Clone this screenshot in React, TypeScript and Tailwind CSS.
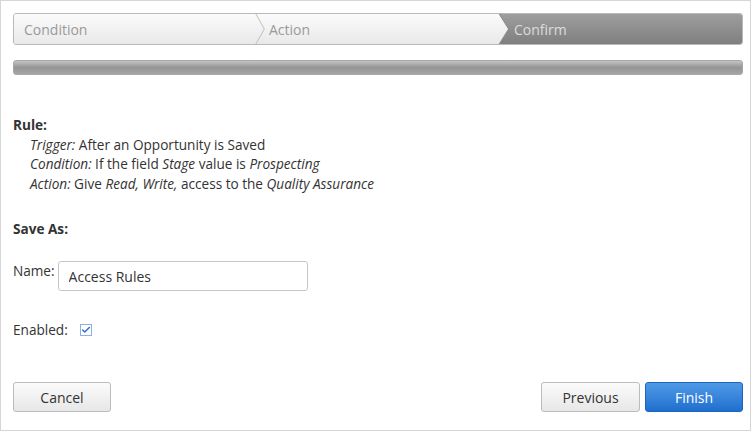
import { Check } from 'lucide-react';

const font = { fontFamily: '"Open Sans", "Noto Sans", sans-serif' };

function Steps() {
  return (
    <div className="relative flex h-8 w-full rounded-[3px] border border-[#b9b9b9] overflow-hidden text-[14px]">
      <div className="flex flex-1 items-center bg-gradient-to-b from-[#fbfbfb] to-[#e9e9e9] pl-[10px] text-[#9a9a9a]">
        Condition
      </div>
      <div className="flex flex-1 items-center bg-gradient-to-b from-[#fbfbfb] to-[#e9e9e9] pl-[17px] text-[#9a9a9a]">
        Action
      </div>
      <div className="flex flex-1 items-center bg-gradient-to-b from-[#9e9e9e] to-[#7f7f7f] pl-[17px] text-[#dcdcdc]">
        Confirm
      </div>
      <svg className="absolute inset-0 pointer-events-none" width="100%" height="100%" viewBox="0 0 727 30" preserveAspectRatio="none">
        <defs>
          <linearGradient id="lt" x1="0" y1="0" x2="0" y2="1">
            <stop offset="0" stopColor="#fbfbfb" />
            <stop offset="1" stopColor="#e9e9e9" />
          </linearGradient>
        </defs>
        <polyline points="241,-1 250,15 241,31" fill="none" stroke="#c4c4c4" strokeWidth="1" />
        <rect x="482" y="0" width="3" height="30" fill="url(#lt)" />
        <polygon points="484,-1 494,15 484,31" fill="url(#lt)" />
        <polyline points="484,-1 494,15 484,31" fill="none" stroke="#8a8a8a" strokeWidth="1" />
      </svg>
    </div>
  );
}

function Button({ children, primary, className }: { children: string; primary?: boolean; className?: string }) {
  return (
    <button
      className={`h-[30px] rounded-[3px] border text-[14px] ${
        primary
          ? 'border-[#1e64bb] bg-gradient-to-b from-[#4f9ae6] to-[#1e6fcf] text-white'
          : 'border-[#bcbcbc] bg-gradient-to-b from-[#fbfbfb] to-[#e7e7e7] text-[#333]'
      } ${className ?? ''}`}
    >
      {children}
    </button>
  );
}

export default function App() {
  return (
    <div
      className="flex h-[431px] w-[751px] flex-col border border-[#d6d6d6] bg-white pl-3 pr-[7px] pt-3 text-[13.6px] text-[#333]"
      style={font}
    >
      <Steps />
      <div className="mt-[15px] h-[15px] rounded-[3px] border border-[#a8a8a8] bg-gradient-to-b from-[#c4c4c4] via-[#959595] to-[#a5a5a5]" />

      <div className="mt-[40px] leading-[19.6px]">
        <div className="font-bold">Rule:</div>
        <div className="pl-[17px]">
          <div>
            <i>Trigger:</i> After an Opportunity is Saved
          </div>
          <div>
            <i>Condition:</i> If the field <i>Stage</i> value is <i>Prospecting</i>
          </div>
          <div>
            <i>Action:</i> Give <i>Read, Write,</i> access to the <i>Quality Assurance</i>
          </div>
        </div>
      </div>

      <div className="mt-[26px] font-bold leading-5">Save As:</div>

      <div className="mt-[22px] flex items-start gap-[3px]">
        <span className="leading-5">Name:</span>
        <input
          readOnly
          value="Access Rules"
          className="h-[30px] w-[250px] rounded-[3px] border border-[#c6c6c6] px-[10px] text-[14px] text-[#333] outline-none"
          style={font}
        />
      </div>

      <div className="mt-[29px] flex items-center gap-[12px] leading-5">
        <span>Enabled:</span>
        <span className="flex h-[12px] w-[12px] items-center justify-center border border-[#8fb0e6] bg-white">
          <Check size={10} strokeWidth={3.5} className="text-[#2a6dd2]" />
        </span>
      </div>

      <div className="mt-auto mb-[18px] flex items-center">
        <Button className="w-[98px]">Cancel</Button>
        <div className="flex-1" />
        <Button className="w-[99px]">Previous</Button>
        <Button primary className="ml-[5px] w-[98px]">
          Finish
        </Button>
      </div>
    </div>
  );
}
